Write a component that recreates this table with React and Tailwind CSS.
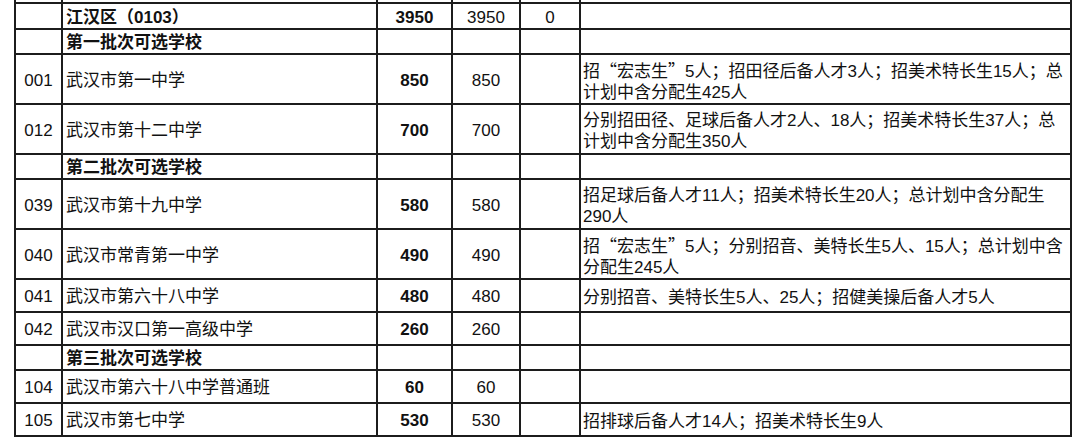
import React from "react";

const rows = [
  { type: "district", name: "江汉区（0103）", a: "3950", b: "3950", c: "0", h: 26 },
  { type: "batch", name: "第一批次可选学校", h: 24 },
  { code: "001", name: "武汉市第一中学", a: "850", b: "850", note: ["招“宏志生”5人；招田径后备人才3人；招美术特长生15人；总", "计划中含分配生425人"], h: 50 },
  { code: "012", name: "武汉市第十二中学", a: "700", b: "700", note: ["分别招田径、足球后备人才2人、18人；招美术特长生37人；总", "计划中含分配生350人"], h: 50 },
  { type: "batch", name: "第二批次可选学校", h: 24 },
  { code: "039", name: "武汉市第十九中学", a: "580", b: "580", note: ["招足球后备人才11人；招美术特长生20人；总计划中含分配生", "290人"], h: 50 },
  { code: "040", name: "武汉市常青第一中学", a: "490", b: "490", note: ["招“宏志生”5人；分别招音、美特长生5人、15人；总计划中含", "分配生245人"], h: 49 },
  { code: "041", name: "武汉市第六十八中学", a: "480", b: "480", note: ["分别招音、美特长生5人、25人；招健美操后备人才5人"], h: 33 },
  { code: "042", name: "武汉市汉口第一高级中学", a: "260", b: "260", h: 33 },
  { type: "batch", name: "第三批次可选学校", h: 24 },
  { code: "104", name: "武汉市第六十八中学普通班", a: "60", b: "60", h: 33 },
  { code: "105", name: "武汉市第七中学", a: "530", b: "530", note: ["招排球后备人才14人；招美术特长生9人"], h: 33 },
  { h: 50 },
];

const cell = "border-2 border-[#1c1c1c] p-0 align-middle";

function NoteLine({ text }) {
  const parts = text.split(/([“”])/);
  return (
    <div>
      {parts.map((p, i) =>
        p === "“" || p === "”" ? (
          <span
            key={i}
            className="inline-block w-[17px] text-center"
            style={{ fontFamily: '"Noto Sans CJK SC", sans-serif' }}
          >
            {p}
          </span>
        ) : (
          <span key={i}>{p}</span>
        )
      )}
    </div>
  );
}

export default function App() {
  return (
    <div
      className="w-[1080px] h-[437px] overflow-hidden bg-white text-[#111] pl-[14px]"
      style={{ fontFamily: '"Liberation Sans", "Noto Sans CJK SC", sans-serif' }}
    >
      <table className="table-fixed border-collapse w-[1056px] text-[17px] leading-[21px]">
        <colgroup>
          <col className="w-[47px]" />
          <col className="w-[315px]" />
          <col className="w-[75px]" />
          <col className="w-[68px]" />
          <col className="w-[60px]" />
          <col className="w-[491px]" />
        </colgroup>
        <tbody>
          <tr className="h-[3px]">
            <td className="border-x-2 border-b-2 border-[#1c1c1c] p-0 leading-[0px]"></td>
            <td className="border-x-2 border-b-2 border-[#1c1c1c] p-0 leading-[0px]"></td>
            <td className="border-x-2 border-b-2 border-[#1c1c1c] p-0 leading-[0px]"></td>
            <td className="border-x-2 border-b-2 border-[#1c1c1c] p-0 leading-[0px]"></td>
            <td className="border-x-2 border-b-2 border-[#1c1c1c] p-0 leading-[0px]"></td>
            <td className="border-x-2 border-b-2 border-[#1c1c1c] p-0 leading-[0px]"></td>
          </tr>
          {rows.map((r, i) => (
            <tr key={i} style={{ height: r.h }}>
              <td className={`${cell} text-center pt-[2px]`}>{r.code || ""}</td>
              <td className={`${cell} pl-[3px] pt-[2px] ${r.type ? "font-bold" : ""}`}>{r.name || ""}</td>
              <td className={`${cell} text-center font-bold pt-[2px]`}>{r.a || ""}</td>
              <td className={`${cell} text-center pt-[2px]`}>{r.b || ""}</td>
              <td className={`${cell} text-center pt-[2px]`}>{r.c || ""}</td>
              <td className={`${cell} pl-[2px] pt-[4px] whitespace-nowrap`}>
                {r.note ? r.note.map((l, j) => <NoteLine key={j} text={l} />) : ""}
              </td>
            </tr>
          ))}
        </tbody>
      </table>
    </div>
  );
}
